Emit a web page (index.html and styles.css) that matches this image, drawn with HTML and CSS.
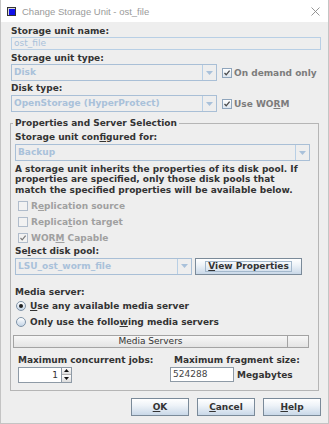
FILE: index.html
```html
<!DOCTYPE html>
<html>
<head>
<meta charset="utf-8">
<link rel="stylesheet" href="styles.css">
</head>
<body>
<div class="win">
  <div class="titlebar">
    <svg class="appicon" width="9" height="9" viewBox="0 0 9 9"><rect x="0.5" y="0.5" width="8" height="8" fill="#d8d8d8" stroke="#333"/><rect x="2" y="2" width="6" height="6" fill="#1010e8"/></svg>
    <span class="title">Change Storage Unit - ost_file</span>
    <svg class="close" width="9" height="9" viewBox="0 0 9 9"><path d="M0.5 0.5 L8.5 8.5 M8.5 0.5 L0.5 8.5" stroke="#8a8a8a" stroke-width="0.9" fill="none"/></svg>
  </div>
  <div class="content">
    <div class="lbl">Storage unit name:</div>
    <div class="tf dis">ost_file</div>

    <div class="lbl mt3">Storage unit type:</div>
    <div class="row">
      <div class="combo dis w-top"><span class="ctext">Disk</span><span class="carrow"><svg width="7" height="4" viewBox="0 0 7 4"><path d="M0 0 H7 L3.5 4 Z" fill="#a9c1da"/></svg></span></div>
      <div class="chk top"><span class="box"><svg width="8" height="8" viewBox="0 0 8 8"><path d="M1.5 4 L3.2 5.8 L6.6 1.6" stroke="#4a4a4a" stroke-width="1.3" fill="none"/></svg></span><span>On demand only</span></div>
    </div>

    <div class="lbl mt2">Disk type:</div>
    <div class="row mt1">
      <div class="combo dis w-top"><span class="ctext">OpenStorage (HyperProtect)</span><span class="carrow"><svg width="7" height="4" viewBox="0 0 7 4"><path d="M0 0 H7 L3.5 4 Z" fill="#a9c1da"/></svg></span></div>
      <div class="chk top"><span class="box"><svg width="8" height="8" viewBox="0 0 8 8"><path d="M1.5 4 L3.2 5.8 L6.6 1.6" stroke="#4a4a4a" stroke-width="1.3" fill="none"/></svg></span><span>Use WO<u>R</u>M</span></div>
    </div>

    <fieldset class="group">
      <legend>Properties and Server Selection</legend>
      <div class="lbl">Storage unit con<u>f</u>igured for:</div>
      <div class="row mt1">
        <div class="combo dis w-full"><span class="ctext">Backup</span><span class="carrow"><svg width="7" height="4" viewBox="0 0 7 4"><path d="M0 0 H7 L3.5 4 Z" fill="#a9c1da"/></svg></span></div>
      </div>
      <div class="desc">A storage unit inherits the properties of its disk pool. If<br>properties are specified, only those disk pools that<br>match the specified properties will be available below.</div>

      <div class="checks">
        <div class="chk sub"><span class="box dbox"></span><span>R<u>e</u>plication source</span></div>
        <div class="chk sub"><span class="box dbox"></span><span>Replica<u>t</u>ion target</span></div>
        <div class="chk sub"><span class="box dbox"><svg width="8" height="8" viewBox="0 0 8 8"><path d="M1.5 4 L3.2 5.8 L6.6 1.6" stroke="#7a7a7a" stroke-width="1.2" fill="none"/></svg></span><span>WOR<u>M</u> Capable</span></div>
      </div>

      <div class="lbl">Se<u>l</u>ect disk pool:</div>
      <div class="row mt1">
        <div class="combo dis w-pool"><span class="ctext">LSU_ost_worm_file</span><span class="carrow"><svg width="7" height="4" viewBox="0 0 7 4"><path d="M0 0 H7 L3.5 4 Z" fill="#a9c1da"/></svg></span></div>
        <div class="btn viewbtn"><span class="focus"><u>V</u>iew Properties</span></div>
      </div>

      <div class="lbl mt12">Media server:</div>
      <div class="radio"><span class="rcircle"><span class="dot"></span></span><span><u>U</u>se any available media server</span></div>
      <div class="radio"><span class="rcircle"></span><span>Only use the follo<u>w</u>ing media servers</span></div>

      <div class="thead"><span class="th1">Media Servers</span><span class="th2"></span></div>

      <div class="limits">
        <div class="lbl">Maximum concurrent jobs:</div>
        <div class="lbl l2">Maximum fragment size:</div>
        <div class="spinner">
          <span class="spval">1</span>
          <span class="spbtns">
            <span class="spb"><svg width="5" height="3" viewBox="0 0 5 3"><path d="M0 3 H5 L2.5 0 Z" fill="#111"/></svg></span>
            <span class="spb"><svg width="5" height="3" viewBox="0 0 5 3"><path d="M0 0 H5 L2.5 3 Z" fill="#111"/></svg></span>
          </span>
        </div>
        <div class="fragrow"><span class="fragtf">524288</span><span class="unit">Megabytes</span></div>
      </div>
    </fieldset>

    <div class="buttons">
      <div class="btn"><span><u>O</u>K</span></div>
      <div class="btn"><span><u>C</u>ancel</span></div>
      <div class="btn"><span><u>H</u>elp</span></div>
    </div>
  </div>
</div>
</body>
</html>
```

FILE: styles.css
```css
* { box-sizing: border-box; }
html, body { margin: 0; padding: 0; }
body {
  width: 329px;
  height: 424px;
  overflow: hidden;
  background: #eeeeee;
  font-family: "DejaVu Sans", sans-serif;
  font-size: 9px;
  color: #333333;
}
u { text-decoration-thickness: 1px; text-underline-offset: 1px; }

.win {
  width: 329px;
  height: 424px;
  background: #eeeeee;
  border-left: 1px solid #c4c4c4;
  border-right: 1px solid #c4c4c4;
  border-bottom: 1px solid #c4c4c4;
  display: flex;
  flex-direction: column;
}
.titlebar {
  height: 22px;
  flex: none;
  background: #ffffff;
  display: flex;
  align-items: center;
  padding-left: 6px;
}
.appicon { margin-right: 6px; }
.title {
  flex: 1;
  font-family: "Liberation Sans", Arial, sans-serif;
  font-size: 9.5px;
  color: #9a9a9a;
}
.close { margin-right: 8px; }

.content { padding: 4px 7px 0 10px; }

.lbl { font-weight: bold; line-height: 11px; height: 11px; white-space: nowrap; }
.mt1 { margin-top: 1px; }
.mt2 { margin-top: 2px; }
.mt3 { margin-top: 3px; }
.mt12 { margin-top: 12px; }

.tf {
  height: 13px;
  border: 1px solid #b8cfe5;
  line-height: 11px;
  padding-left: 2px;
}
.dis { color: #a9c1da; }

.row { display: flex; align-items: center; height: 17px; }

.combo {
  height: 17px;
  display: flex;
  border: 1px solid #a9bfd6;
  background: #eeeeee;
}
.w-top { width: 206px; }
.w-full { width: 295px; }
.w-pool { width: 177px; }
.ctext {
  flex: 1;
  padding-left: 2px;
  line-height: 15px;
  font-weight: bold;
  white-space: nowrap;
  overflow: hidden;
}
.carrow {
  width: 14px;
  border-left: 1px solid #b8cfe5;
  display: flex;
  align-items: center;
  justify-content: center;
}

.chk {
  display: flex;
  align-items: center;
  font-weight: bold;
  white-space: nowrap;
}
.chk.top { margin-left: 5px; color: #7c7c7c; }
.box {
  width: 10px;
  height: 10px;
  border: 1px solid #8fa5bc;
  background: linear-gradient(#ffffff, #dde6ef);
  margin-right: 2px;
  display: flex;
  align-items: center;
  justify-content: center;
}
.dbox { border-color: #b0bccb; background: #f2f2f2; }
.checks { margin-top: 2px; }
.chk.sub { height: 16px; margin-left: 3px; color: #a0a0a0; }
.chk.sub .box { margin-right: 3px; }

.group {
  margin: 6px 0 0 -1px;
  padding: 3px 8px 7px 4px;
  border: 1px solid #b5b5b5;
  width: 309px;
  min-width: 0;
}
.group legend {
  padding: 0 2px;
  margin-left: -2px;
  font-weight: bold;
  line-height: 11px;
}
.desc {
  margin-top: 2.5px;
  line-height: 10.7px;
  font-weight: bold;
  white-space: nowrap;
}

.btn {
  height: 18px;
  width: 58px;
  border: 1px solid #7a8a99;
  background: linear-gradient(#ffffff 0%, #eef3f8 40%, #c9d8e8 100%);
  font-weight: bold;
  color: #333333;
  display: flex;
  align-items: center;
  justify-content: center;
  white-space: nowrap;
}
.viewbtn { width: 107px; height: 17px; margin-left: 3px; }
.focus { border: 1px solid #a3b8cc; padding: 0 2px; line-height: 9px; }

.radio {
  display: flex;
  align-items: center;
  height: 16px;
  font-weight: bold;
  white-space: nowrap;
}
.rcircle {
  width: 10px;
  height: 10px;
  border-radius: 50%;
  border: 1px solid #7f93a8;
  background: linear-gradient(#ffffff, #c3d4e6);
  margin: 0 4px 0 1px;
  display: flex;
  align-items: center;
  justify-content: center;
}
.dot { width: 4px; height: 4px; border-radius: 50%; background: #222; }

.thead {
  display: flex;
  height: 13px;
  width: 296px;
  margin: 5px 0 0 -2px;
  border: 1px solid #a3a3a3;
  background: linear-gradient(#f7f7f7, #e4e4e4);
  line-height: 11px;
}
.th1 { flex: 1; text-align: center; border-right: 1px solid #a3a3a3; }
.th2 { width: 20px; }

.limits {
  display: grid;
  grid-template-columns: 152px auto;
  row-gap: 1px;
  margin-top: 7px;
  padding-left: 3px;
}
.l2 { margin-left: 4px; }
.spinner {
  width: 54px;
  height: 16px;
  display: flex;
  border: 1px solid #8e9aa6;
  background: #ffffff;
}
.spval { flex: 1; text-align: right; padding-right: 3px; line-height: 14px; }
.spbtns {
  width: 10px;
  display: flex;
  flex-direction: column;
  border-left: 1px solid #8e9aa6;
}
.spb {
  flex: 1;
  display: flex;
  align-items: center;
  justify-content: center;
  background: linear-gradient(#ffffff, #dcdcdc);
}
.spb + .spb { border-top: 1px solid #b0b0b0; }
.fragrow { display: flex; align-items: center; height: 16px; }
.fragtf {
  width: 64px;
  height: 15px;
  border: 1px solid #8e9aa6;
  background: #ffffff;
  line-height: 13px;
  padding-left: 2px;
  color: #444444;
}
.unit { font-weight: bold; margin-left: 3px; }

.buttons {
  display: flex;
  justify-content: flex-end;
  gap: 8px;
  margin-top: 7px;
}
```
